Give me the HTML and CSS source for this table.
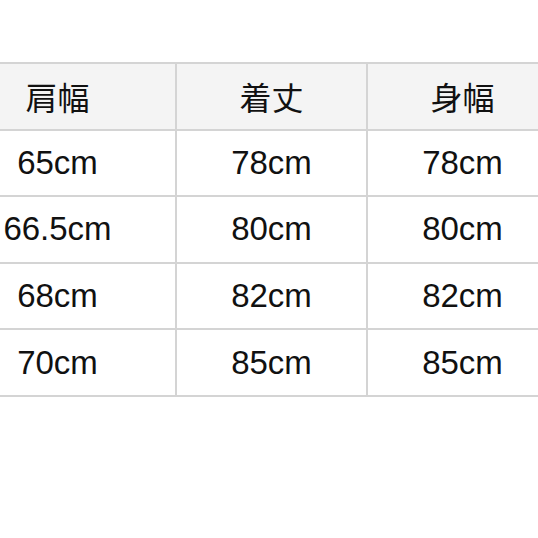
FILE: index.html
```html
<!DOCTYPE html>
<html lang="ja">
<head>
<meta charset="utf-8">
<link rel="stylesheet" href="styles.css">
</head>
<body>
<div class="page">
<table class="size-table">
  <thead>
    <tr><th class="c1">肩幅</th><th class="c2">着丈</th><th class="c3">身幅</th></tr>
  </thead>
  <tbody>
    <tr><td>65cm</td><td>78cm</td><td>78cm</td></tr>
    <tr><td>66.5cm</td><td>80cm</td><td>80cm</td></tr>
    <tr><td>68cm</td><td>82cm</td><td>82cm</td></tr>
    <tr><td>70cm</td><td>85cm</td><td>85cm</td></tr>
  </tbody>
</table>
</div>
</body>
</html>
```
FILE: styles.css
```css
html, body {
  margin: 0;
  padding: 0;
  background: #ffffff;
}
.page {
  width: 538px;
  height: 538px;
  overflow: hidden;
  padding-top: 62px;
  box-sizing: border-box;
}
.size-table {
  margin-left: -62px;
  border-collapse: collapse;
  table-layout: fixed;
  width: 615px;
  font-family: "Liberation Sans", "Noto Sans CJK JP", Arial, sans-serif;
  color: #111111;
}
.size-table th,
.size-table td {
  border: 2px solid #d4d4d4;
  height: 64.6px;
  padding: 0;
  text-align: center;
  vertical-align: middle;
  font-size: 33px;
  font-weight: normal;
}
.size-table th {
  background: #f4f4f4;
  font-family: "Noto Sans CJK JP", sans-serif;
  font-size: 32px;
}
.c1 { width: 235px; }
.c2 { width: 189px; }
.c3 { width: 189px; }
```
